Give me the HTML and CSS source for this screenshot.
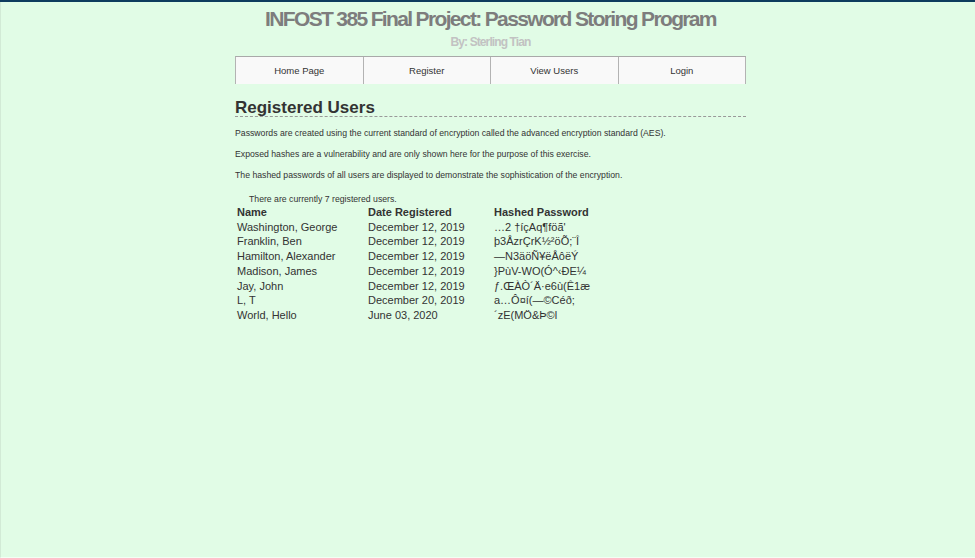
FILE: index.html
```html
<!DOCTYPE html>
<html>
<head>
<meta charset="utf-8">
<link rel="stylesheet" href="styles.css">
</head>
<body>
<div class="page">
  <div class="wrap">
    <header class="masthead">
      <h1 class="title">INFOST 385 Final Project: Password Storing Program</h1>
      <div class="byline">By: Sterling Tian</div>
    </header>
    <nav class="nav">
      <a class="nav-item">Home Page</a>
      <a class="nav-item">Register</a>
      <a class="nav-item">View Users</a>
      <a class="nav-item">Login</a>
    </nav>
    <main class="content">
      <h2 class="heading">Registered Users</h2>
      <p class="para">Passwords are created using the current standard of encryption called the advanced encryption standard (AES).</p>
      <p class="para">Exposed hashes are a vulnerability and are only shown here for the purpose of this exercise.</p>
      <p class="para">The hashed passwords of all users are displayed to demonstrate the sophistication of the encryption.</p>
      <p class="count">There are currently 7 registered users.</p>
      <table class="users">
        <tr><th>Name</th><th>Date Registered</th><th>Hashed Password</th></tr>
        <tr><td>Washington, George</td><td>December 12, 2019</td><td>…2 †íçAq¶föã'</td></tr>
        <tr><td>Franklin, Ben</td><td>December 12, 2019</td><td>þ3ÅzrÇrK½²öÕ;¨Î</td></tr>
        <tr><td>Hamilton, Alexander</td><td>December 12, 2019</td><td>—N3äöÑ¥ëÅôëÝ</td></tr>
        <tr><td>Madison, James</td><td>December 12, 2019</td><td>}PùV-WO(Ó^‹ÐE¼</td></tr>
        <tr><td>Jay, John</td><td>December 12, 2019</td><td>ƒ.ŒÀÒ´Ä·e6ù(Ê1æ</td></tr>
        <tr><td>L, T</td><td>December 20, 2019</td><td>a…Ô¤í(—©Céð;</td></tr>
        <tr><td>World, Hello</td><td>June 03, 2020</td><td>´zE(MÖ&amp;Þ©l</td></tr>
      </table>
    </main>
  </div>
</div>
</body>
</html>
```
FILE: styles.css
```css
html, body {
  margin: 0;
  padding: 0;
  height: 100%;
}
body {
  background: #0d3c5e;
  font-family: "Liberation Sans", Arial, sans-serif;
  color: #333;
}
.page {
  margin-top: 2px;
  height: 556px;
  background: #e1fce6;
  border-left: 1px solid #d2ead6;
  border-bottom: 1px solid #f2fff4;
  padding-left: 5px;
  box-sizing: border-box;
}
.wrap {
  width: 511px;
  margin: 0 auto;
}
.masthead {
  text-align: center;
  padding-top: 5px;
}
.title {
  margin: 0;
  font-size: 21px;
  line-height: 24px;
  font-weight: bold;
  letter-spacing: -1.65px;
  color: #7d7d7d;
  white-space: nowrap;
  margin-left: -80px;
  margin-right: -80px;
}
.byline {
  margin-top: 4px;
  font-size: 12px;
  line-height: 14px;
  font-weight: bold;
  letter-spacing: -0.9px;
  color: #c2c2c2;
}
.nav {
  margin-top: 7px;
  display: flex;
  border-top: 1px solid #a9a9a9;
  border-left: 1px solid #b3b3b3;
  background: #f9f9f9;
  height: 27px;
}
.nav-item {
  flex: 1;
  border-right: 1px solid #b3b3b3;
  display: flex;
  align-items: center;
  justify-content: center;
  font-size: 9.5px;
  color: #333;
}
.content {
  padding-top: 13px;
}
.heading {
  margin: 0;
  padding-top: 2px;
  font-size: 17px;
  line-height: 17px;
  font-weight: bold;
  color: #333;
  border-bottom: 1px dashed #999;
}
.para {
  margin: 10px 0 0;
  font-size: 8.7px;
  line-height: 13px;
  color: #333;
}
.para + .para {
  margin-top: 8px;
}
.count {
  margin: 12px 0 0 14px;
  font-size: 8.7px;
  line-height: 11px;
  color: #333;
}
.users {
  margin-top: 0;
  border-collapse: collapse;
  font-size: 11px;
  color: #333;
}
.users th, .users td {
  text-align: left;
  padding: 0 0 0 2px;
  line-height: 14.7px;
  height: 14.7px;
}
.users th:first-child, .users td:first-child {
  width: 129px;
}
.users th:nth-child(2), .users td:nth-child(2) {
  width: 124px;
}
.users th {
  font-weight: bold;
}
```
